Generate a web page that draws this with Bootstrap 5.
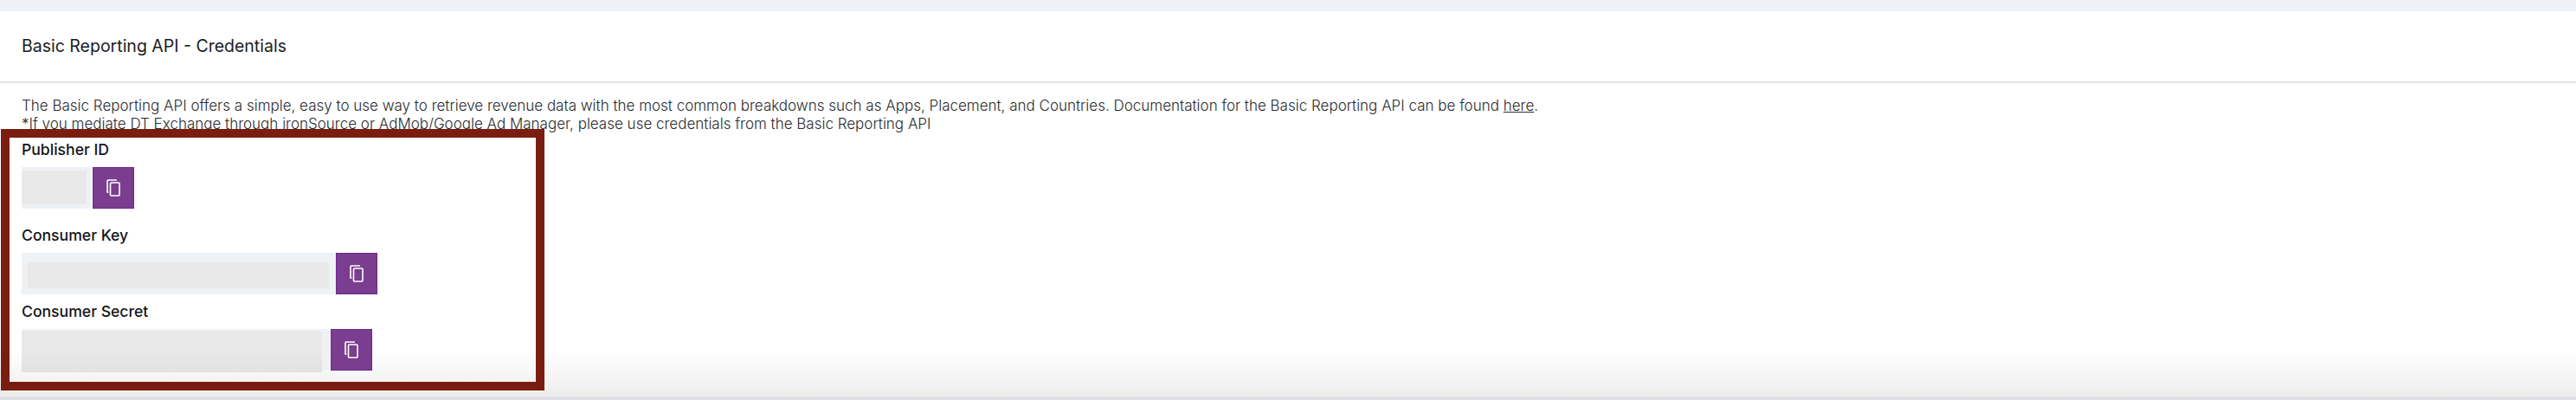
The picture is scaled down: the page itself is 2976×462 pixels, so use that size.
<!DOCTYPE html>
<html lang="en">
<head>
<meta charset="utf-8">
<title>Basic Reporting API - Credentials</title>
<link href="https://cdn.jsdelivr.net/npm/bootstrap@5.3.0/dist/css/bootstrap.min.css" rel="stylesheet">
<style>
html, body { height: 462px; overflow: hidden; }
body { background: #fff; color: #212529; font-family: Inter, "Liberation Sans", sans-serif; position: relative; }
.top-band { height: 13px; background: #eef2f6; }
.head-row { height: 83px; padding: 0 25px; border-bottom: 2px solid #e2e3e5; }
.head-row h1 { font-size: 19.5px; font-weight: 400; margin: 0; color: #1a1c1f; line-height: 1; }
.intro { padding: 16px 25px 0; font-size: 17px; line-height: 21px; color: #2a2c2f; font-weight: 300; }
.intro a { color: inherit; }
.hl-box { position: relative; z-index: 1; margin: -5px 0 0 1px; width: 628px; height: 302px; border: 10px solid #7a1d10; padding: 0 14px; }
.fld-label { font-size: 17.6px; font-weight: 500; line-height: 20px; color: #141517; }
.lbl-pub { padding-top: 4px; }
.lbl-key { margin-top: 21px; }
.lbl-sec { margin-top: 10px; }
.cred-row { height: 48px; margin-top: 10px; }
.cred-val { background: #eff2f5; height: 48px; flex: none; }
.mask { background: #e9e9e9; }
.w-pub { width: 81px; padding: 4px 6px 5px 0; }
.w-key { width: 363px; padding: 11px 8px 7px 7px; }
.w-sec { width: 356px; margin-right: 1px; height: 48px; }
.mask-sec { width: 347px; height: 48px; margin-top: 2px; background: linear-gradient(to bottom, #e9e9e9 40%, #e2e2e2); }
.copy-btn { width: 48px; height: 48px; padding: 0; border-radius: 0; background: #7a3d8f; border: 1px solid #6b2a8c; }
.w-pub + .copy-btn { margin-left: 1px; }
.bottom-fade { position: absolute; left: 0; right: 0; top: 405px; height: 53px; pointer-events: none; background: linear-gradient(to bottom, rgba(225,225,225,0), rgba(225,225,225,.6)); }
.bottom-band { position: absolute; left: 0; right: 0; top: 458px; height: 4px; background: #dfe1e4; }
</style>
</head>
<body>
<div class="top-band"></div>
<div class="head-row d-flex align-items-center"><h1>Basic Reporting API - Credentials</h1></div>
<div class="intro">
  The Basic Reporting API offers a simple, easy to use way to retrieve revenue data with the most common breakdowns such as Apps, Placement, and Countries. Documentation for the Basic Reporting API can be found <a href="#">here</a>.<br>
  *If you mediate DT Exchange through ironSource or AdMob/Google Ad Manager, please use credentials from the Basic Reporting API
</div>
<div class="hl-box">
  <div class="fld-label lbl-pub">Publisher ID</div>
  <div class="cred-row d-flex">
    <div class="cred-val w-pub"><div class="mask h-100"></div></div>
    <button class="btn copy-btn d-flex align-items-center justify-content-center" aria-label="Copy"><svg width="16" height="20" viewBox="0 0 16 20" fill="none" stroke="#fff" stroke-width="1.600"><path d="M2.500 15H1V2a1 1 0 0 1 1-1h10"/><rect x="4.500" y="4" width="10.500" height="15" rx="1"/></svg></button>
  </div>
  <div class="fld-label lbl-key">Consumer Key</div>
  <div class="cred-row d-flex">
    <div class="cred-val w-key"><div class="mask h-100"></div></div>
    <button class="btn copy-btn d-flex align-items-center justify-content-center" aria-label="Copy"><svg width="16" height="20" viewBox="0 0 16 20" fill="none" stroke="#fff" stroke-width="1.600"><path d="M2.500 15H1V2a1 1 0 0 1 1-1h10"/><rect x="4.500" y="4" width="10.500" height="15" rx="1"/></svg></button>
  </div>
  <div class="fld-label lbl-sec">Consumer Secret</div>
  <div class="cred-row d-flex">
    <div class="cred-val w-sec"><div class="mask mask-sec"></div></div>
    <button class="btn copy-btn d-flex align-items-center justify-content-center" aria-label="Copy"><svg width="16" height="20" viewBox="0 0 16 20" fill="none" stroke="#fff" stroke-width="1.600"><path d="M2.500 15H1V2a1 1 0 0 1 1-1h10"/><rect x="4.500" y="4" width="10.500" height="15" rx="1"/></svg></button>
  </div>
</div>
<div class="bottom-fade"></div>
<div class="bottom-band"></div>
<script src="https://cdn.jsdelivr.net/npm/bootstrap@5.3.0/dist/js/bootstrap.bundle.min.js"></script>
</body>
</html>
